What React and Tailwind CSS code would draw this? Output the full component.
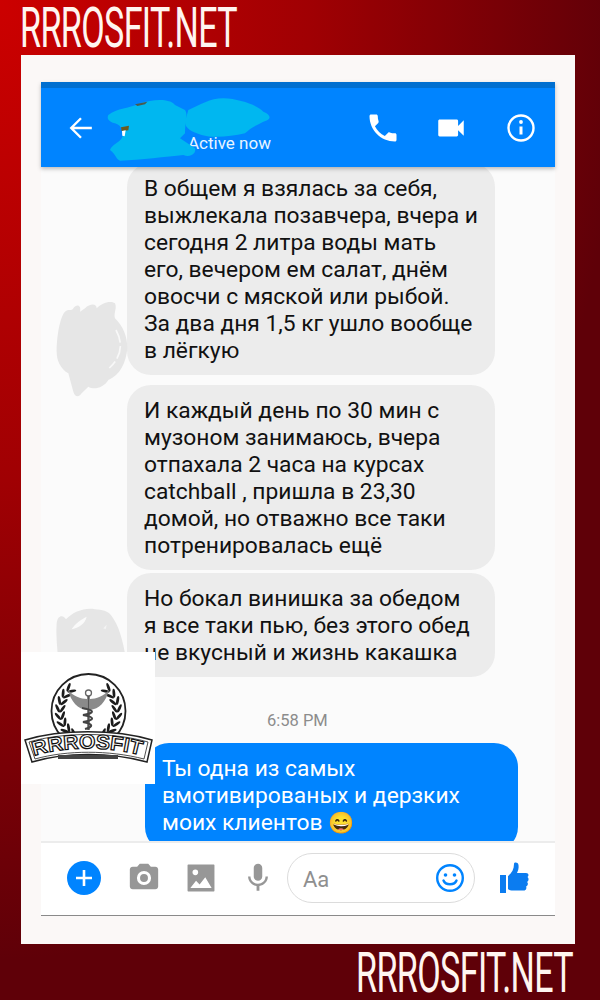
import React from 'react';

const Title = ({ className }) => (
    <div className={`font-['Roboto',sans-serif] text-[55px] leading-[54px] text-[#fff5f0] tracking-[-1px] scale-x-[0.62] whitespace-nowrap ${className}`}>
        RRROSFIT.NET
    </div>
);

const Bubble = ({ lines, className }) => (
    <div className={`rounded-[24px] px-[17px] py-[12px] text-[22.8px] leading-[27px] ${className}`}>
        {lines.map((line, i) => (
            <div key={i} className="whitespace-nowrap">{line}</div>
        ))}
    </div>
);

// two rows of leaves on each side of the wreath
const leaves = [];
[26, 31].forEach((r, row) => {
    for (let i = 0; i < 8; i++) {
        const phi = -50 + i * 15;
        const rad = (phi * Math.PI) / 180;
        const tilt = row === 0 ? 90 - phi + 30 : 90 - phi - 30;
        leaves.push({ x: 67.5 - r * Math.cos(rad), y: 59 + r * Math.sin(rad), tilt, key: `${row}-${i}` });
    }
});

const Logo = () => (
    <svg viewBox="0 0 134 132" className="w-[134px] h-[132px]">
        <circle cx="67.5" cy="59" r="37" fill="none" stroke="#222" strokeWidth="1.8" />
        {leaves.map((l) => (
            <g key={l.key} fill="#1c1c1c">
                <ellipse cx={l.x} cy={l.y} rx="4.5" ry="1.4" transform={`rotate(${l.tilt} ${l.x} ${l.y})`} />
                <ellipse cx={135 - l.x} cy={l.y} rx="4.5" ry="1.4" transform={`rotate(${-l.tilt} ${135 - l.x} ${l.y})`} />
            </g>
        ))}
        {/* wings */}
        <path d="M47 38 C52 44 60 47 66 47 L66 58 C57 57 50 50 47 38 Z" fill="#8a8a8a" />
        <path d="M88 38 C83 44 75 47 69 47 L69 58 C78 57 85 50 88 38 Z" fill="#8a8a8a" />
        <circle cx="67.5" cy="41" r="3" fill="#fff" stroke="#666" strokeWidth="1.3" />
        <rect x="66.3" y="44" width="2.4" height="34" fill="#555" />
        <path d="M61 56 C74 58 74 61 62 63 C74 65 74 68 62 70 C73 72 72 75 64 77" fill="none" stroke="#444" strokeWidth="2.2" />
        {/* banner */}
        <path d="M4 88 C40 77 94 77 131 88 L126 110 C90 100 44 100 11 110 Z" fill="#fff" stroke="#222" strokeWidth="1.5" />
        <path d="M8 90 C42 80 92 80 127 90 L123 107 C88 98 46 98 14 107 Z" fill="none" stroke="#222" strokeWidth="0.8" />
        <path id="logoArc" d="M13 104 C44 94 90 94 122 104" fill="none" />
        <text fontFamily="Liberation Sans, sans-serif" fontWeight="700" fontSize="20" fill="#fff" stroke="#111" strokeWidth="1.2">
            <textPath href="#logoArc" textLength="108" lengthAdjust="spacingAndGlyphs">RRROSFIT</textPath>
        </text>
        <rect x="37" y="103" width="60" height="4" fill="#444" />
    </svg>
);

const App = () => (
    <div className="w-[600px] h-[1000px] overflow-hidden flex flex-col bg-[radial-gradient(ellipse_620px_960px_at_0_0,#cc0000_0%,#a00003_50%,#5f0008_100%)] font-['Roboto',sans-serif]">
        <div className="h-[55px] pt-[1px] shrink-0">
            <Title className="origin-left ml-[20px]" />
        </div>

        {/* card with the chat photo */}
        <div className="relative ml-[21px] w-[554px] h-[889px] shrink-0 bg-[#fbf8f7] pt-[27px] px-[20px]">
            <div className="h-[834px] flex flex-col bg-[#fbfbfb] border-b border-[#8a8a8a]">
                {/* top bar */}
                <div className="relative z-10 h-[85px] shrink-0 bg-[#0084ff] border-t-[6px] border-[#006fd0] shadow-[0_2px_4px_rgba(0,0,0,0.25)] flex items-center pl-[27px] pr-[19px]">
                    <svg width="26" height="26" viewBox="0 0 24 24" fill="none" stroke="white" strokeWidth="2.2">
                        <path d="M22 12H3M12 3l-9 9 9 9" />
                    </svg>
                    <div className="ml-[94px] mt-[33px] text-[17px] text-[#e8f4ff] whitespace-nowrap">Active now</div>
                    <div className="ml-auto flex items-center">
                        <svg width="36" height="36" viewBox="0 0 24 24" fill="white" className="mr-[33px]">
                            <path d="M6.62 10.79c1.44 2.83 3.76 5.14 6.59 6.59l2.2-2.2c.27-.27.67-.36 1.02-.24 1.12.37 2.33.57 3.57.57.55 0 1 .45 1 1V20c0 .55-.45 1-1 1-9.39 0-17-7.61-17-17 0-.55.45-1 1-1h3.5c.55 0 1 .45 1 1 0 1.25.2 2.45.57 3.57.11.35.03.74-.25 1.02l-2.2 2.2z" />
                        </svg>
                        <svg width="34" height="34" viewBox="0 0 24 24" fill="white" className="mr-[38px]">
                            <path d="M17 10.5V7c0-.55-.45-1-1-1H4c-.55 0-1 .45-1 1v10c0 .55.45 1 1 1h12c.55 0 1-.45 1-1v-3.5l4 4v-11l-4 4z" />
                        </svg>
                        <svg width="30" height="30" viewBox="0 0 30 30" fill="none" stroke="white" strokeWidth="2.4">
                            <circle cx="15" cy="15" r="12.5" />
                            <path d="M15 13.5v8" strokeWidth="3" />
                            <circle cx="15" cy="9" r="1.9" fill="white" stroke="none" />
                        </svg>
                    </div>
                    {/* name painted over */}
                    <svg viewBox="0 0 660 225" className="absolute left-[19px] top-[7px] w-[220px] h-[75px]">
                        <path
                            fill="#00b7f0"
                            d="M145 60 C170 40 210 40 240 25 C280 12 330 10 345 30 L375 45 C385 60 375 80 375 115 L360 130 L405 160 C410 175 390 190 370 180 C320 185 240 195 180 197 C165 190 170 180 150 165 C155 150 175 145 185 130 C195 115 185 90 165 85 C145 80 140 70 145 60 Z"
                        />
                        <path
                            fill="#00b7f0"
                            d="M385 45 C420 30 450 10 490 10 C540 12 590 30 610 50 C635 60 635 75 610 80 C590 90 570 100 555 115 C510 125 460 130 425 120 C395 110 375 100 375 80 Z"
                        />
                        <path fill="#6b5a1e" d="M183 97 L207 92 L205 106 L185 108 Z" />
                        <path fill="#fff" d="M186 108 L197 106 L194 124 L187 122 Z" />
                        <path fill="#4a5a50" d="M225 28 L262 20 L255 28 L232 33 Z" />
                    </svg>
                </div>

                {/* messages */}
                <div className="flex-1 min-h-0 overflow-hidden relative flex flex-col items-start text-[#111]">
                    <Bubble
                        className="ml-[86px] mt-[-4px] w-[368px] h-[212px] shrink-0 bg-[#ececec]"
                        lines={[
                            'В общем я взялась за себя,',
                            'выжлекала позавчера, вчера и',
                            'сегодня 2 литра воды мать',
                            'его, вечером ем салат, днём',
                            'овосчи с мяской или рыбой.',
                            'За два дня 1,5 кг ушло вообще',
                            'в лёгкую',
                        ]}
                    />
                    <Bubble
                        className="ml-[86px] mt-[10px] w-[368px] h-[185px] shrink-0 bg-[#ececec]"
                        lines={[
                            'И каждый день по 30 мин с',
                            'музоном занимаюсь, вчера',
                            'отпахала 2 часа на курсах',
                            'catchball , пришла в 23,30',
                            'домой, но отважно все таки',
                            'потренировалась ещё',
                        ]}
                    />
                    <Bubble
                        className="ml-[86px] mt-[3px] w-[368px] h-[104px] shrink-0 bg-[#ececec]"
                        lines={[
                            'Но бокал винишка за обедом',
                            'я все таки пью, без этого обед',
                            'не вкусный и жизнь какашка',
                        ]}
                    />
                    <div className="w-full mt-[34px] pl-[226px] text-[16.5px] leading-[20px] text-[#8c8c8c] shrink-0">6:58 PM</div>
                    <Bubble
                        className="ml-[104px] mt-[12px] w-[373px] shrink-0 bg-[#0084ff] text-white h-[108px]"
                        lines={[
                            'Ты одна из самых',
                            'вмотивированых и дерзких',
                            <>моих клиентов <span className="text-[21px]">😄</span></>,
                        ]}
                    />
                    {/* avatars painted over */}
                    <svg viewBox="0 0 360 360" className="absolute left-[-1px] top-[113px] w-[120px] h-[120px]">
                        <path
                            fill="#e6e6e6"
                            d="M50 215 C50 170 60 110 75 95 C85 85 95 95 100 85 C110 70 125 75 120 95 L135 85 C150 70 170 70 170 85 C185 70 210 60 225 70 C232 85 220 100 225 115 C250 140 262 170 262 205 C258 250 240 285 205 300 C190 325 160 330 145 320 L125 340 C115 355 105 350 100 335 L85 280 C60 265 50 240 50 215 Z"
                        />
                        <path d="M228 150 C250 190 245 230 208 264" fill="none" stroke="#f8f8f8" strokeWidth="5" strokeDasharray="40 10" />
                    </svg>
                    <svg viewBox="0 0 360 210" className="absolute left-[-1px] top-[423px] w-[120px] h-[70px]">
                        <path
                            fill="#e6e6e6"
                            d="M50 100 C52 78 68 72 78 88 C100 65 135 52 165 58 C185 60 205 62 215 78 C235 105 250 150 258 210 L55 210 C50 160 48 130 50 100 Z"
                        />
                        <path d="M95 118 C105 100 125 88 140 80 C135 100 120 112 95 118 Z" fill="#fafafa" />
                        <path d="M190 115 L200 104 L197 118 Z" fill="#f4f4f4" />
                    </svg>
                </div>

                {/* input bar */}
                <div className="h-[74px] shrink-0 bg-white border-t-2 border-[#ececec] flex items-center pl-[26px] pb-[2px]">
                    <div className="w-[34px] h-[34px] rounded-full bg-[#0084ff] flex items-center justify-center">
                        <svg width="20" height="20" viewBox="0 0 20 20" stroke="white" strokeWidth="2.6"><path d="M10 2v16M2 10h16" /></svg>
                    </div>
                    <svg width="34" height="34" viewBox="0 0 24 24" fill="#979797" className="ml-[26px]">
                        <path d="M9 2 7.17 4H4c-1.1 0-2 .9-2 2v12c0 1.1.9 2 2 2h16c1.1 0 2-.9 2-2V6c0-1.1-.9-2-2-2h-3.17L15 2H9zm3 15a5 5 0 1 1 0-10 5 5 0 0 1 0 10zm0-2.2a2.8 2.8 0 1 0 0-5.6 2.8 2.8 0 0 0 0 5.6z" fillRule="evenodd" />
                    </svg>
                    <svg width="34" height="34" viewBox="0 0 24 24" fill="#979797" className="ml-[23px]">
                        <path d="M3 2.5h18c.3 0 .5.2.5.5v18c0 .3-.2.5-.5.5H3c-.3 0-.5-.2-.5-.5V3c0-.3.2-.5.5-.5zM8 6a2 2 0 1 0 0 4 2 2 0 0 0 0-4zm-3.5 13h15L15 11.5l-4 5-2.5-2.5L4.5 19z" fillRule="evenodd" />
                    </svg>
                    <svg width="34" height="34" viewBox="0 0 24 24" fill="#979797" className="ml-[23px]">
                        <path d="M12 14c1.66 0 3-1.34 3-3V5c0-1.66-1.34-3-3-3S9 3.34 9 5v6c0 1.66 1.34 3 3 3zm5.3-3c0 3-2.54 5.1-5.3 5.1S6.7 14 6.7 11H5c0 3.41 2.72 6.23 6 6.72V21h2v-3.28c3.28-.48 6-3.3 6-6.72h-1.7z" />
                    </svg>
                    <div className="ml-[12px] w-[188px] h-[50px] rounded-full border-[1.5px] border-[#dcdcdc] flex items-center pl-[15px] pr-[9px]">
                        <span className="text-[22px] text-[#8f8f8f] mt-[2px]">Aa</span>
                        <svg width="30" height="30" viewBox="0 0 30 30" fill="none" stroke="#0084ff" strokeWidth="2.4" className="ml-auto">
                            <circle cx="15" cy="15" r="12.8" />
                            <circle cx="10.5" cy="12" r="1.8" fill="#0084ff" stroke="none" />
                            <circle cx="19.5" cy="12" r="1.8" fill="#0084ff" stroke="none" />
                            <path d="M8.5 17.5c2 5 11 5 13 0" strokeLinecap="round" />
                        </svg>
                    </div>
                    <svg width="30" height="32" viewBox="0 0 30 32" fill="#0b7cf0" className="ml-[24px]">
                        <rect x="1" y="13" width="6" height="18" />
                        <path d="M9 14 C13 11 15 7 15 2 C15 0 19 0 19.5 3 C20 6 19 9 18 11 L27 11 C30 11 30 14 28.5 15 C30 16 30 19 28 20 C29.5 21 29 24 27 24.5 C28 26 27 28.5 25 28.5 L14 28.5 C12 28.5 10 28 9 27 Z" />
                    </svg>
                </div>
            </div>

            {/* logo sticker */}
            <div className="absolute left-0 top-[597px] w-[134px] h-[132px] bg-white">
                <Logo />
            </div>
        </div>

        <div className="flex justify-end pr-[27px] pt-[2px]">
            <Title className="origin-right" />
        </div>
    </div>
);

export default App;
